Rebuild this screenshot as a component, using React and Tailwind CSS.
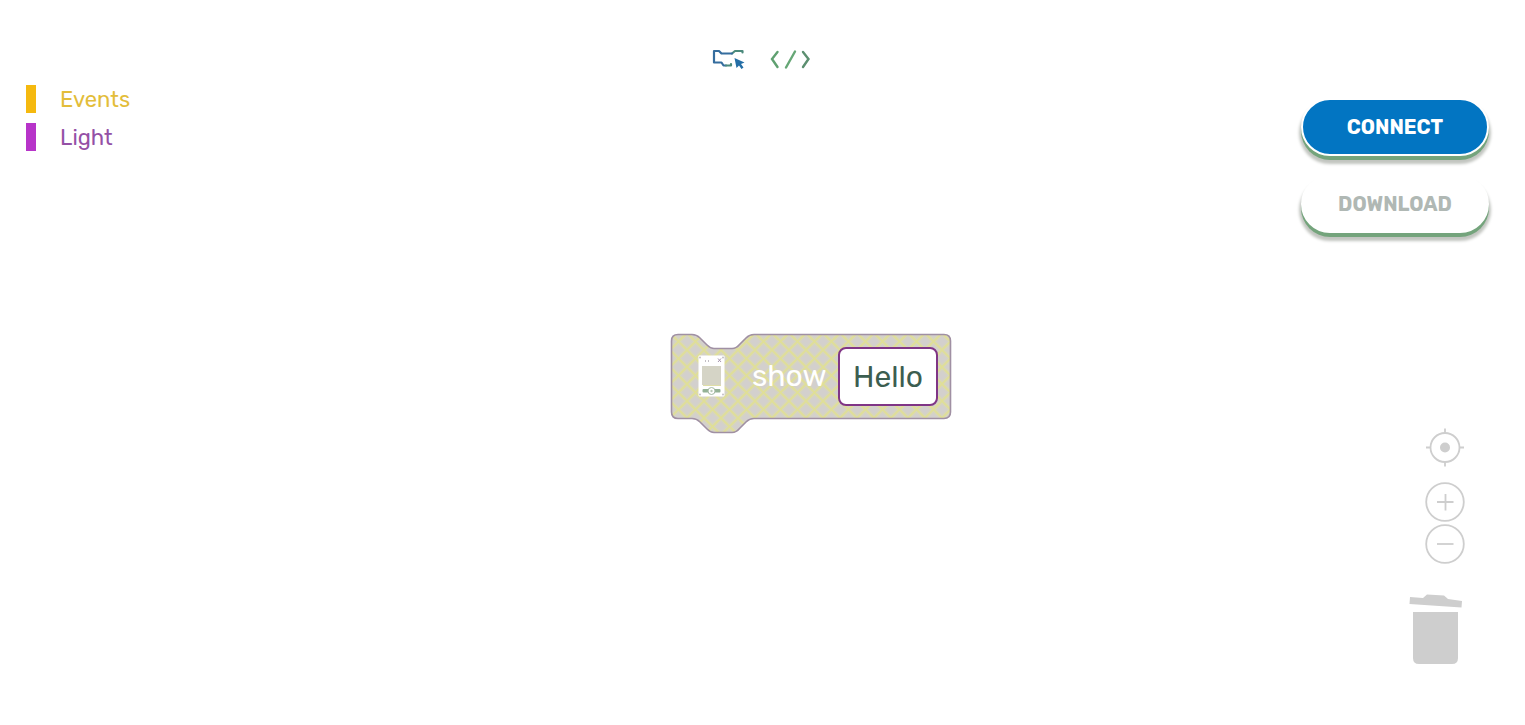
import React, { useState } from "react";

const categories = [
  { name: "Events", bar: "bg-[#f5b90f]", text: "text-[#e3bd3a]" },
  { name: "Light", bar: "bg-[#b734c9]", text: "text-[#9450a6]" },
];

function BlocksIcon() {
  return (
    <svg width="34" height="24" viewBox="0 0 34 24" fill="none" aria-hidden="true">
      <g strokeWidth="2.200" strokeLinejoin="round" strokeLinecap="round">
        <path d="M21 6.500L24 4H31.500V5.500" stroke="#4b8a7c" />
        <path d="M15 18.500H12.500L10.500 15.500H3V4H8L10.500 6.500H21" stroke="#356d9e" />
        <path d="M15 18.500H20V17" stroke="#4b8a7c" />
      </g>
      <path d="M23.500 11L33.500 15.500L30 17L32.500 20.500L30.500 22L28 18.500L25.500 21Z" fill="#246ea6" />
    </svg>
  );
}

function CodeIcon() {
  return (
    <svg width="42" height="24" viewBox="0 0 42 24" fill="none" strokeWidth="2.400" strokeLinecap="round" aria-hidden="true">
      <path d="M8.500 5L3 12L8.500 20" stroke="#5fa070" />
      <path d="M26 4.500L17 20.500" stroke="#66a776" />
      <path d="M34 5L39.500 12L34 20" stroke="#5c8f70" />
    </svg>
  );
}

function BlockShape() {
  return (
    <svg className="absolute inset-0" width="282" height="101" viewBox="0 0 282 101" aria-hidden="true">
      <defs>
        <pattern id="lattice" width="17" height="17" patternUnits="userSpaceOnUse">
          <rect width="17" height="17" fill="#d3d0cd" />
          <path d="M-2 -2L19 19M19 -2L-2 19" stroke="#d8d6bc" strokeWidth="4.500" />
          <path d="M-2 -2L19 19M19 -2L-2 19" stroke="#e0df96" strokeWidth="1.600" />
        </pattern>
      </defs>
      <path
        d="M8 1.500H22C26 1.500 28 3 30 5L36 11C38.500 13.500 40 15.500 44 15.500H62C66 15.500 68 13.500 70 11L76 5C78 3 80 1.500 84 1.500H274Q280.500 1.500 280.500 8V79Q280.500 85.500 274 85.500H84C80 85.500 78 87 76 89L70 95C68 97.500 66 99.500 62 99.500H44C40 99.500 38.500 97.500 36 95L30 89C28 87 26 85.500 22 85.500H8Q1.500 85.500 1.500 79V8Q1.500 1.500 8 1.500Z"
        fill="url(#lattice)"
        stroke="#a090a3"
        strokeWidth="1.600"
      />
    </svg>
  );
}

function DeviceIcon() {
  return (
    <svg className="relative shrink-0" width="28" height="44" viewBox="0 0 28 44" aria-hidden="true">
      <rect x="0.500" y="0.500" width="26" height="41" rx="1" fill="#fff" />
      <rect x="4" y="11" width="19" height="19" fill="#d5d4c6" />
      <path d="M5 30.500H23" stroke="#dfdea6" />
      <g fill="#c3bfc5">
        <circle cx="2" cy="2.500" r="1" />
        <circle cx="25" cy="2.500" r="1" />
        <circle cx="2" cy="39.500" r="1" />
        <circle cx="25" cy="39.500" r="1" />
        <path d="M7 5h1v2h-1zM10 5h1v2h-1z" />
      </g>
      <path d="M20 3.500l3 3.500M23 3.500l-3 3.500" stroke="#a696ae" />
      <rect x="4.500" y="34" width="18" height="3.500" rx="1" fill="#94b295" />
      <circle cx="13.500" cy="36" r="3.500" fill="#fff" stroke="#a5bba4" />
      <circle cx="13.500" cy="36" r="1.200" fill="#b9cbb8" />
    </svg>
  );
}

function CenterIcon() {
  return (
    <svg width="40" height="40" viewBox="0 0 40 40" fill="none" stroke="#cecece" strokeWidth="1.800" aria-hidden="true">
      <circle cx="20" cy="19.500" r="14.500" />
      <path d="M20 0.500V5M20 34V38.500M1 19.500H5.500M34.500 19.500H39" />
      <circle cx="20" cy="19.500" r="5" fill="#cecece" stroke="none" />
    </svg>
  );
}

function ZoomIcon({ plus }) {
  return (
    <svg width="40" height="40" viewBox="0 0 40 40" fill="none" stroke="#cecece" strokeWidth="1.800" aria-hidden="true">
      <circle cx="20" cy="20" r="18.800" />
      <path d={plus ? "M12 20H28.500M20.500 12V28.500" : "M12 20H28.500"} />
    </svg>
  );
}

function TrashIcon() {
  return (
    <svg width="54" height="72" viewBox="0 0 54 72" fill="#cecece" aria-hidden="true">
      <path d="M4 20H49V66Q49 72 43 72H10Q4 72 4 66Z" />
      <path d="M1 5L14 6L18 2.500L35 3.500L39 7L53 9L52.500 15.500L0.500 12Z" />
    </svg>
  );
}

export default function App() {
  const [message, setMessage] = useState("Hello");
  return (
    <div className="flex min-h-screen flex-col bg-white font-['Rubik','Roboto',sans-serif]">
      <header className="flex h-20 items-center justify-center gap-6 pt-9.5 pr-1">
        <button type="button" aria-label="Blocks" className="cursor-pointer">
          <BlocksIcon />
        </button>
        <button type="button" aria-label="Code" className="cursor-pointer">
          <CodeIcon />
        </button>
      </header>
      <main className="flex flex-1">
        <nav aria-label="Categories" className="w-40 shrink-0 pl-6.5">
          <ul>
            {categories.map((c) => (
              <li key={c.name}>
                <a href={"#" + c.name.toLowerCase()} className={`flex h-[38px] items-center gap-6 text-[22px] ${c.text}`}>
                  <span className={`h-7 w-2.5 ${c.bar}`} />
                  {c.name}
                </a>
              </li>
            ))}
          </ul>
        </nav>
        <section aria-label="Workspace" className="relative flex-1">
          <div className="absolute top-[253px] left-[510px] h-[101px] w-[282px]">
            <BlockShape />
            <div className="flex h-[87px] items-center pr-3.5 pl-7">
              <DeviceIcon />
              <label htmlFor="message" className="relative ml-6.5 text-[30px] text-white">
                show
              </label>
              <input
                id="message"
                value={message}
                onChange={(e) => setMessage(e.target.value)}
                className="relative ml-auto h-[59px] w-[100px] rounded-lg border-2 border-[#803586] bg-white text-center text-[30px] text-[#3c5e50] outline-none"
              />
            </div>
          </div>
        </section>
        <aside className="flex shrink-0 flex-col items-end pt-4.5 pr-9">
          <div className="flex w-[188px] flex-col gap-[19px]">
            <button
              type="button"
              className="h-[58px] cursor-pointer rounded-full border-2 border-white bg-[#0275c2] text-xl font-bold text-white shadow-[0_4px_0_#74a47c,0_6px_3px_2px_#c2c5c0]"
            >
              CONNECT
            </button>
            <button
              type="button"
              className="h-[58px] cursor-pointer rounded-full border-2 border-white bg-white text-xl font-bold text-[#b0b8b4] shadow-[0_4px_0_#74a47c,0_6px_3px_2px_#c2c5c0]"
            >
              DOWNLOAD
            </button>
          </div>
          <div className="mt-[195px] flex flex-col items-center pr-6">
            <button type="button" aria-label="Center blocks" className="h-10 cursor-pointer">
              <CenterIcon />
            </button>
            <button type="button" aria-label="Zoom in" className="mt-3.5 h-10 cursor-pointer">
              <ZoomIcon plus />
            </button>
            <button type="button" aria-label="Zoom out" className="mt-0.5 h-10 cursor-pointer">
              <ZoomIcon />
            </button>
          </div>
          <button type="button" aria-label="Delete" className="mt-7 mr-6.5 h-[72px] cursor-pointer">
            <TrashIcon />
          </button>
        </aside>
      </main>
    </div>
  );
}
